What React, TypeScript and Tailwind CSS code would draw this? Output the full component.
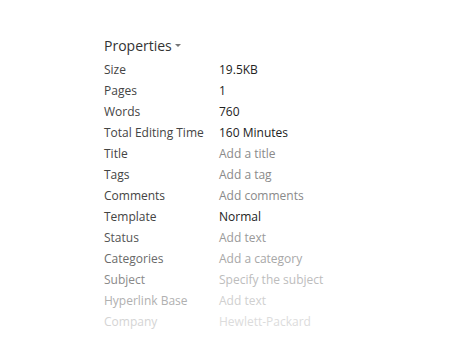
import React from "react";

type Row = { label: string; value: string; lc: string; vc: string };

const rows: Row[] = [
	{ label: "Size", value: "19.5KB", lc: "text-[#444]", vc: "text-[#222]" },
	{ label: "Pages", value: "1", lc: "text-[#444]", vc: "text-[#222]" },
	{ label: "Words", value: "760", lc: "text-[#444]", vc: "text-[#222]" },
	{ label: "Total Editing Time", value: "160 Minutes", lc: "text-[#444]", vc: "text-[#222]" },
	{ label: "Title", value: "Add a title", lc: "text-[#444]", vc: "text-[#8a8a8a]" },
	{ label: "Tags", value: "Add a tag", lc: "text-[#444]", vc: "text-[#8a8a8a]" },
	{ label: "Comments", value: "Add comments", lc: "text-[#444]", vc: "text-[#8a8a8a]" },
	{ label: "Template", value: "Normal", lc: "text-[#444]", vc: "text-[#222]" },
	{ label: "Status", value: "Add text", lc: "text-[#555]", vc: "text-[#9a9a9a]" },
	{ label: "Categories", value: "Add a category", lc: "text-[#6a6a6a]", vc: "text-[#a8a8a8]" },
	{ label: "Subject", value: "Specify the subject", lc: "text-[#8a8a8a]", vc: "text-[#bdbdbd]" },
	{ label: "Hyperlink Base", value: "Add text", lc: "text-[#b0b0b0]", vc: "text-[#d0d0d0]" },
	{ label: "Company", value: "Hewlett-Packard", lc: "text-[#d4d4d4]", vc: "text-[#dcdcdc]" },
];

export default function App() {
	return (
		<div className="w-[461px] h-[342px] bg-white overflow-hidden font-['Open_Sans',sans-serif]">
			<div className="pl-[104px] pt-[35px]">
				<div className="flex items-center h-[20px] text-[14px] text-[#333]">
					<span>Properties</span>
					<svg width="6" height="4" viewBox="0 0 6 4" className="ml-[3px] mt-[2px]">
						<path d="M0 0h6L3 3z" fill="#777" />
					</svg>
				</div>
				<div className="mt-[4px] flex flex-col">
					{rows.map((r) => (
						<div key={r.label} className="flex h-[21px] items-center text-[12px]">
							<span className={`w-[115px] ${r.lc}`}>{r.label}</span>
							<span className={r.vc}>{r.value}</span>
						</div>
					))}
				</div>
			</div>
		</div>
	);
}
